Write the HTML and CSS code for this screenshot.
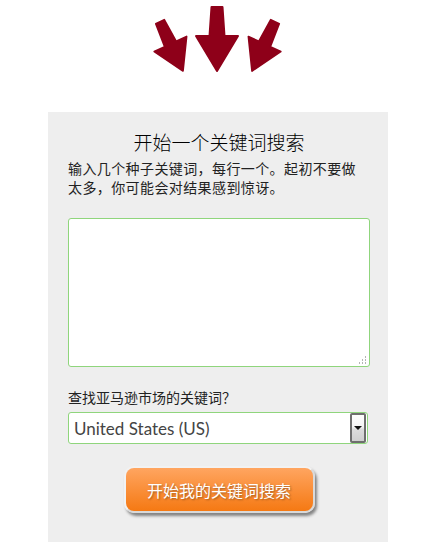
FILE: index.html
```html
<!DOCTYPE html>
<html lang="zh-CN">
  <head>
    <meta charset="UTF-8" />
    <meta name="viewport" content="width=device-width, initial-scale=1.0" />
    <title>关键词搜索</title>
    <link rel="stylesheet" href="styles.css">
  </head>
  <body>
    <div class="arrows">
      <svg width="150" height="80" viewBox="0 0 150 80">
        <defs>
          <path id="arrow" d="M-5.5,-64 L5.5,-64 L7.5,-35 L21,-35 L0,0 L-21,-35 L-7.5,-35 Z" />
        </defs>
        <g fill="#8e0019" stroke="#8e0019" stroke-width="2" stroke-linejoin="round">
          <use href="#arrow" transform="translate(43,71) rotate(-25) scale(0.85)" />
          <use href="#arrow" transform="translate(77,71)" />
          <use href="#arrow" transform="translate(112,71) rotate(25) scale(0.85)" />
        </g>
      </svg>
    </div>

    <div class="panel">
      <h2>开始一个关键词搜索</h2>
      <p class="intro">输入几个种子关键词，每行一个。起初不要做太多，你可能会对结果感到惊讶。</p>

      <textarea class="seeds" id="seeds"></textarea>

      <label class="market-label" for="market">查找亚马逊市场的关键词？</label>
      <div class="select-wrap">
        <select id="market">
          <option>United States (US)</option>
          <option>United Kingdom (UK)</option>
          <option>Germany (DE)</option>
        </select>
        <span class="select-btn"></span>
      </div>

      <div class="actions">
        <button class="go" type="button">开始我的关键词搜索</button>
      </div>
    </div>
  </body>
</html>
```

FILE: styles.css
```css
body {
  margin: 0;
  background-color: #fff;
  font-family: "Noto Sans CJK SC", "Noto Sans", sans-serif;
  color: #222;
}

.arrows svg {
  display: block;
  margin-left: 140px;
}

.panel {
  box-sizing: border-box;
  width: 340px;
  min-height: 440px;
  margin: 32px 0 0 48px;
  padding: 16px 18px 30px 20px;
  background-color: #eeeeee;
}

h2 {
  margin: 0;
  font-size: 19px;
  line-height: 27px;
  font-weight: 300;
  text-align: center;
  color: #000;
}

.intro {
  margin: 4px 0 0;
  padding-right: 2px;
  font-size: 14px;
  letter-spacing: 0.4px;
  line-height: 19px;
}

/* dotted grip drawn in the corner instead of the default one */
.seeds {
  display: block;
  box-sizing: border-box;
  width: 302px;
  height: 149px;
  margin-top: 21px;
  border: 1px solid #8fd57c;
  border-radius: 3px;
  background-color: #fff;
  background-image:
    linear-gradient(#b5b5b5, #b5b5b5),
    linear-gradient(#b5b5b5, #b5b5b5),
    linear-gradient(#b5b5b5, #b5b5b5),
    linear-gradient(#b5b5b5, #b5b5b5),
    linear-gradient(#b5b5b5, #b5b5b5),
    linear-gradient(#b5b5b5, #b5b5b5);
  background-size: 1px 2px;
  background-repeat: no-repeat;
  background-position:
    right 3px bottom 2px,
    right 6px bottom 2px,
    right 9px bottom 2px,
    right 3px bottom 5px,
    right 6px bottom 5px,
    right 3px bottom 8px;
  resize: none;
  outline: none;
}

.market-label {
  display: block;
  margin-top: 21px;
  font-size: 14px;
  line-height: 19px;
}

.select-wrap {
  display: flex;
  box-sizing: border-box;
  width: 300px;
  height: 32px;
  margin-top: 5px;
  border: 1px solid #8fd57c;
  border-radius: 3px;
  background-color: #fff;
}

.select-wrap select {
  flex: 1;
  appearance: none;
  -webkit-appearance: none;
  border: none;
  background: transparent;
  padding: 0 0 0 5px;
  font-family: "Lato", "Open Sans", sans-serif;
  font-size: 17px;
  color: #444;
  outline: none;
}

.select-btn {
  box-sizing: border-box;
  width: 16px;
  margin-right: 1px;
  border: 2px solid #6e6e6e;
  border-radius: 2px;
  background: linear-gradient(#fdfdfd 0%, #f4f4f4 45%, #dcdcdc 55%, #cfcfcf 100%);
  display: flex;
  align-items: center;
  justify-content: center;
  pointer-events: none;
}

.select-btn::after {
  content: "";
  border-left: 4px solid transparent;
  border-right: 4px solid transparent;
  border-top: 4px solid #111;
}

.actions {
  display: flex;
  justify-content: center;
  margin-top: 22px;
}

.go {
  box-sizing: border-box;
  width: 191px;
  height: 47px;
  border: 2px solid #f2f2f2;
  border-right-color: #d9d9d9;
  border-bottom-color: #d9d9d9;
  border-radius: 10px;
  background: linear-gradient(#ffa560, #f57913);
  box-shadow: 2px 3px 3px rgba(0, 0, 0, 0.45);
  color: #fff;
  font-family: "Noto Sans CJK SC", sans-serif;
  font-size: 16px;
  text-shadow: 1px 1px 2px rgba(0, 0, 0, 0.35);
  cursor: pointer;
}
```
